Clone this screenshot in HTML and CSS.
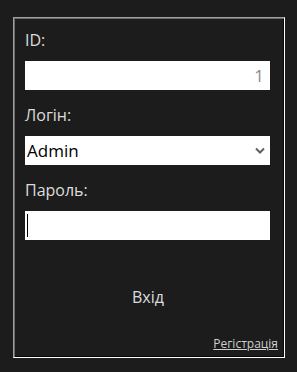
FILE: index.html
```html
<!DOCTYPE html>
<html lang="uk">
<head>
  <meta charset="UTF-8" />
  <meta name="viewport" content="width=device-width, initial-scale=1" />
  <title>Вхід</title>
  <link rel="stylesheet" href="styles.css">
</head>
<body>
  <!-- Login Box -->
  <form class="login-box">
    <div class="field">
      <label for="user-id">ID:</label>
      <input type="text" id="user-id" class="form-control id-input" value="1" readonly>
    </div>
    <div class="field">
      <label for="login">Логін:</label>
      <select id="login" class="form-control">
        <option>Admin</option>
      </select>
    </div>
    <div class="field">
      <label for="password">Пароль:</label>
      <div class="input-wrap">
        <input type="password" id="password" class="form-control">
        <span class="caret"></span>
      </div>
    </div>
    <button type="button" class="btn-enter">Вхід</button>
    <div class="register-row">
      <a href="#" class="register-link">Регістрація</a>
    </div>
  </form>
</body>
</html>
```

FILE: styles.css
```css
html {
  background: #1c1c1c;
}

body {
  margin: 0;
  padding: 17px 0 0 13px;
  font-family: 'Open Sans', 'Noto Sans', sans-serif;
  color: #dcdcdc;
}

/* Login Box (inset frame) */
.login-box {
  box-sizing: border-box;
  width: 272px;
  height: 341px;
  margin: 0;
  padding: 10px 12px 0 10px;
  border: 1px solid;
  border-color: #a0a0a0 #ffffff #ffffff #a0a0a0;
  box-shadow: inset 1px 1px 0 #696969, inset -1px -1px 0 #050505;
  display: flex;
  flex-direction: column;
}

.field {
  display: flex;
  flex-direction: column;
  padding-left: 1px;
  margin-bottom: 13px;
}

.field label {
  font-size: 16px;
  line-height: 24px;
  margin-bottom: 9px;
}

/* Input Styling */
.form-control {
  box-sizing: border-box;
  width: 245px;
  height: 29px;
  margin: 0;
  border: none;
  border-radius: 0;
  background: #ffffff;
  color: #000;
  font-family: 'Open Sans', 'Noto Sans', sans-serif;
  font-size: 17px;
  padding: 0 4px;
  outline: none;
}

.id-input {
  text-align: right;
  color: #8a8a8a;
  padding-right: 6px;
}

select.form-control {
  appearance: none;
  -webkit-appearance: none;
  padding-left: 2px;
  background-image: url("data:image/svg+xml,%3Csvg xmlns='http://www.w3.org/2000/svg' width='10' height='7' viewBox='0 0 10 7'%3E%3Cpath d='M1 1.5 L5 5.5 L9 1.5' fill='none' stroke='%23606060' stroke-width='2'/%3E%3C/svg%3E");
  background-repeat: no-repeat;
  background-position: right 5px center;
}

.input-wrap {
  position: relative;
  width: 245px;
}

.input-wrap .form-control {
  display: block;
}

/* text cursor shown in the focused password field */
.caret {
  position: absolute;
  left: 2px;
  top: 3px;
  width: 1px;
  height: 23px;
  background: #000;
}

.btn-enter {
  align-self: center;
  margin-top: 29px;
  background: none;
  border: none;
  color: #dcdcdc;
  font-family: 'Open Sans', 'Noto Sans', sans-serif;
  font-size: 16px;
  padding: 4px 10px;
  cursor: pointer;
}

.register-row {
  margin-top: auto;
  padding-bottom: 4px;
  text-align: right;
  margin-right: -6px;
}

.register-link {
  font-size: 12px;
  color: #cfcfcf;
  text-decoration: underline;
}
```
